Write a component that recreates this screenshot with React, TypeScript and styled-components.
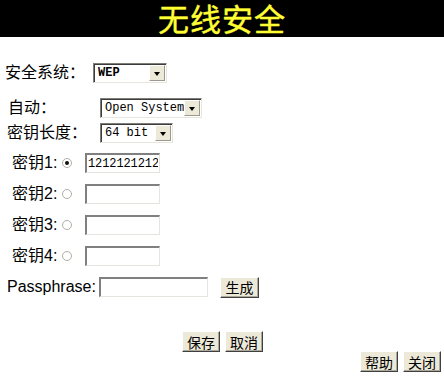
import React from 'react';
import styled, { createGlobalStyle, css } from 'styled-components';

const Global = createGlobalStyle`
	html, body {
		margin: 0;
		padding: 0;
		background: #fff;
	}
	body {
		font-family: "Liberation Sans", "Noto Sans CJK SC", sans-serif;
		color: #000;
	}
`

const Page = styled.div`
	width: 444px;
	height: 376px;
	display: flex;
	flex-direction: column;
	overflow: hidden;
`
const Header = styled.div`
	height: 37px;
	flex: none;
	box-sizing: border-box;
	padding-top: 2px;
	background: #000;
	color: #ffff33;
	font-family: "Noto Sans CJK SC", sans-serif;
	font-size: 31px;
	line-height: 32px;
	text-align: center;
	letter-spacing: 1px;
	-webkit-text-stroke: 0.4px #ffff33;
`
const Form = styled.div`
	display: flex;
	flex-direction: column;
	padding-top: 26px;
`
const Row = styled.div<{ indent: number; gap?: number }>`
	display: flex;
	align-items: center;
	height: 20px;
	padding-left: ${p => p.indent}px;
	margin-bottom: ${p => p.gap ?? 11}px;
`
const Label = styled.span<{ w: number }>`
	width: ${p => p.w}px;
	flex: none;
	font-family: "Liberation Sans", "Noto Sans CJK SC", sans-serif;
	font-size: 16px;
	line-height: 20px;
	white-space: nowrap;
`
const SelectBox = styled.div<{ w: number }>`
	width: ${p => p.w}px;
	height: 20px;
	box-sizing: border-box;
	display: flex;
	border-top: 1px solid #7f7d76;
	border-left: 1px solid #7f7d76;
	border-right: 1px solid #e8e6dc;
	border-bottom: 1px solid #e8e6dc;
	box-shadow: inset 1px 1px 0 #3c3c3c;
	background: #fff;
`
const SelectText = styled.span<{ bold?: boolean }>`
	flex: 1;
	padding-left: 4px;
	padding-top: 1px;
	font-family: "Liberation Mono", monospace;
	font-size: 12px;
	line-height: 17px;
	white-space: nowrap;
	overflow: hidden;
	${p => p.bold && css`
		font-weight: bold;
	`}
`
const Arrow = styled.span`
	width: 16px;
	margin: 1px 1px 1px 0;
	flex: none;
	background: #ece9d8;
	border-top: 1px solid #fff;
	border-left: 1px solid #fff;
	border-right: 1px solid #9c9a90;
	border-bottom: 1px solid #9c9a90;
	box-sizing: border-box;
	display: flex;
	align-items: center;
	justify-content: center;
	&::after {
		content: '';
		border-left: 3.5px solid transparent;
		border-right: 3.5px solid transparent;
		border-top: 4px solid #000;
		margin-top: 2px;
	}
`
const Radio = styled.span<{ checked?: boolean }>`
	width: 10px;
	height: 10px;
	flex: none;
	box-sizing: border-box;
	border-radius: 50%;
	border: 1px solid #b0aea6;
	background: #fff;
	margin-right: 13px;
	display: flex;
	align-items: center;
	justify-content: center;
	${p => p.checked && css`
		&::after {
			content: '';
			width: 4px;
			height: 4px;
			border-radius: 50%;
			background: #111;
		}
	`}
`
const Input = styled.input<{ w: number }>`
	width: ${p => p.w}px;
	height: 20px;
	box-sizing: border-box;
	margin: 0;
	padding: 0 1px;
	border-top: 2px solid #808080;
	border-left: 2px solid #808080;
	border-right: 1px solid #e6e4de;
	border-bottom: 1px solid #e6e4de;
	background: #fff;
	font-family: "Liberation Mono", monospace;
	font-size: 12px;
	letter-spacing: -0.1px;
	outline: none;
`
const Button = styled.button<{ w?: number }>`
	width: ${p => p.w ?? 37}px;
	height: 21px;
	margin: 0;
	padding: 0;
	flex: none;
	box-sizing: border-box;
	background: #ece9d8;
	border-top: 1px solid #fff;
	border-left: 1px solid #fff;
	border-right: 1px solid #404040;
	border-bottom: 1px solid #404040;
	box-shadow: inset -1px -1px 0 #aca899;
	font-family: "Noto Sans CJK SC", sans-serif;
	font-size: 14px;
	line-height: 18px;
	color: #000;
`
const GenButton = styled(Button)`
	margin-left: 12px;
`
const Actions = styled.div`
	display: flex;
	justify-content: center;
	gap: 5px;
	margin-top: 34px;
	padding-left: 1px;
`
const Footer = styled.div`
	display: flex;
	justify-content: flex-end;
	gap: 5px;
	margin-top: -1px;
	padding-right: 3px;
`

const keys = ['1212121212', '', '', '']

export default function App() {
	return (
		<Page>
			<Global />
			<Header>无线安全</Header>
			<Form>
				<Row indent={5} gap={15}>
					<Label w={88}>安全系统：</Label>
					<SelectBox w={74}>
						<SelectText bold>WEP</SelectText>
						<Arrow />
					</SelectBox>
				</Row>
				<Row indent={8} gap={5}>
					<Label w={92}>自动：</Label>
					<SelectBox w={102}>
						<SelectText>Open System</SelectText>
						<Arrow />
					</SelectBox>
				</Row>
				<Row indent={7} gap={10}>
					<Label w={93}>密钥长度：</Label>
					<SelectBox w={73}>
						<SelectText>64 bit</SelectText>
						<Arrow />
					</SelectBox>
				</Row>
				{keys.map((k, i) => (
					<Row indent={12} key={i}>
						<Label w={50}>{`密钥${i + 1}:`}</Label>
						<Radio checked={i === 0} />
						<Input w={75} defaultValue={k} />
					</Row>
				))}
				<Row indent={7} gap={0}>
					<Label w={92}>Passphrase:</Label>
					<Input w={109} defaultValue="" />
					<GenButton w={39}>生成</GenButton>
				</Row>
				<Actions>
					<Button w={38}>保存</Button>
					<Button w={38}>取消</Button>
				</Actions>
				<Footer>
					<Button w={38}>帮助</Button>
					<Button w={38}>关闭</Button>
				</Footer>
			</Form>
		</Page>
	)
}
